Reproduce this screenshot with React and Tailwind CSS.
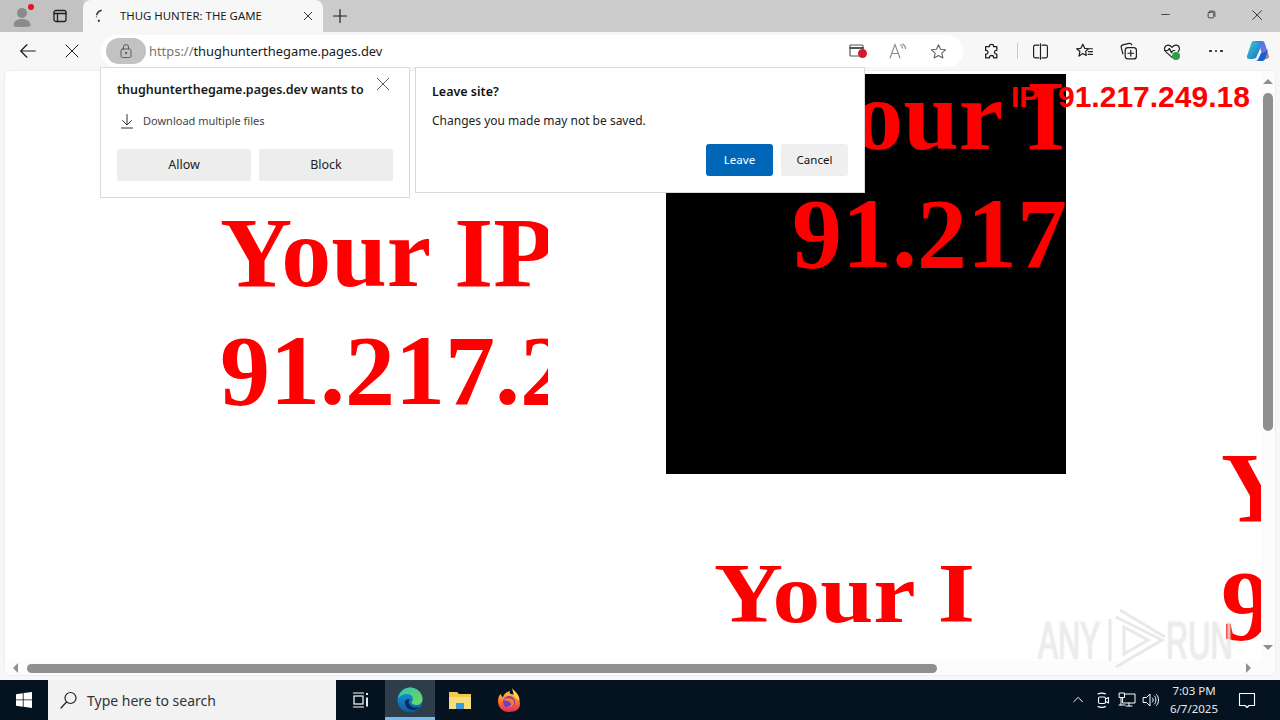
import React from "react";

const I = ({ s = 16, w, h, children, c = "#1f1f1f", sw = 1.2, vb = "0 0 16 16" }) => (
  <svg width={w || s} height={h || s} viewBox={vb} fill="none" stroke={c} strokeWidth={sw} strokeLinecap="round" strokeLinejoin="round">{children}</svg>
);

const Slot = ({ className = "w-[44px]", children }) => (
  <div className={"flex h-full shrink-0 items-center justify-center " + className}>{children}</div>
);

const star = "M8 1.6 9.9 5.9 14.6 6.4 11.1 9.5 12.1 14.1 8 11.7 3.9 14.1 4.9 9.5 1.4 6.4 6.1 5.9Z";

function Big({ className, lines }) {
  return (
    <div className={"absolute overflow-hidden whitespace-nowrap font-['Liberation_Serif',serif] text-[100px] leading-[118px] font-bold text-[#ff0000] " + className}>
      {lines.map((l) => <div key={l}>{l}</div>)}
    </div>
  );
}

function TitleBar() {
  return (
    <div className="flex h-8 shrink-0 items-end bg-[#cccccc]">
      <div className="flex h-full w-[83px] items-center bg-[#c2c2c2]">
        <div className="relative flex h-full w-[44px] items-center justify-center">
          <svg width="22" height="24" viewBox="0 0 22 24" fill="#8a8a8a">
            <circle cx="11" cy="9" r="5" />
            <path d="M2.5 22c0-5 3.5-7 8.5-7s8.5 2 8.5 7c-3 1.4-14 1.4-17 0Z" />
          </svg>
          <span className="absolute left-[28px] top-[4px] size-[6px] rounded-full bg-[#e81123]" />
        </div>
        <Slot className="w-[32px]">
          <I s={16} sw={1.3}>
            <rect x="2" y="2.5" width="12" height="11" rx="2" />
            <path d="M2 5.5h12M5.5 5.5v8" />
          </I>
        </Slot>
      </div>
      <div className="flex h-full w-[240px] items-center rounded-t-lg bg-[#f7f7f7]">
        <svg className="ml-[8px]" width="14" height="16" viewBox="0 0 14 16" fill="none" stroke="#444" strokeWidth="1.8" strokeLinecap="round">
          <path d="M10 2.500C8 3 6.500 4.500 5.800 6.500" />
          <path d="M5.500 8.800v.1" strokeWidth="1.500" stroke="#888" />
          <path d="M7.800 12.500v.6" stroke="#333" strokeWidth="2" />
        </svg>
        <span className="ml-[15px] w-[182px] font-['Noto_Sans',sans-serif] text-[11.4px] leading-none whitespace-nowrap text-[#1a1a1a]">THUG HUNTER: THE GAME</span>
        <I s={12} sw={1.2}><path d="M3 3l10 10M13 3 3 13" /></I>
      </div>
      <Slot className="w-[34px]">
        <I s={16} sw={1.2}><path d="M8 1.5v13M1.5 8h13" /></I>
      </Slot>
      <div className="flex-1" />
      <Slot className="w-[46px]"><I s={12} sw={1}><path d="M1 6h10" /></I></Slot>
      <Slot className="w-[46px]">
        <I s={12} sw={1}><rect x="1.5" y="3" width="7.5" height="7.5" rx="1.5" /><path d="M3.5 1.5h5a2 2 0 0 1 2 2v5" /></I>
      </Slot>
      <Slot className="w-[44px]"><I s={14} sw={1}><path d="M2 2l10 10M12 2 2 12" /></I></Slot>
    </div>
  );
}

function Toolbar() {
  return (
    <div className="flex h-[38px] shrink-0 items-center bg-[#f7f7f7]">
      <Slot className="ml-[6px] w-[44px]">
        <I s={18} sw={1.1}><path d="M1.5 8h13M7 2.5 1.5 8 7 13.5" /></I>
      </Slot>
      <Slot className="w-[44px]"><I s={16} sw={1}><path d="M2 2l12 12M14 2 2 14" /></I></Slot>
      <div className="ml-[7px] flex h-[32px] w-[862px] items-center rounded-full bg-white">
        <div className="ml-[5px] flex h-[26px] w-[40px] items-center justify-center rounded-full bg-[#c2c2c2]">
          <I s={16} c="#5f5f5f" sw={1}>
            <rect x="3" y="6" width="10" height="8.5" rx="1.5" />
            <path d="M5.5 6V4a2.5 2.5 0 0 1 5 0v2" />
            <circle cx="8" cy="10" r=".7" fill="#5f5f5f" />
          </I>
        </div>
        <span className="ml-[3px] pt-[2px] font-['Noto_Sans',sans-serif] text-[12.9px] whitespace-nowrap text-[#777777]">
          https://<span className="text-[#1a1a1a]">thughunterthegame.pages.dev</span>
        </span>
        <div className="flex-1" />
        <Slot className="w-[40px]">
          <div className="relative h-[16px] w-[18px]">
            <I s={16} c="#555" sw={1.2}>
              <rect x="1" y="2" width="13" height="11" rx="1" />
              <path d="M1 5h13" strokeWidth="2" />
            </I>
            <span className="absolute left-[9px] top-[6px] flex size-[9px] items-center justify-center rounded-full bg-[#d9172b]" />
          </div>
        </Slot>
        <Slot className="w-[40px]">
          <svg width="18" height="16" viewBox="0 0 18 16" fill="none" stroke="#8a8a8a" strokeWidth="1.1" strokeLinecap="round">
            <path d="M1 15 6 1.5 11 15M2.8 10.5h6.4" />
            <path d="M11.5 2c1.3.7 2 1.7 2 3M13.5 1c2 1 3 2.5 3 4.5" />
          </svg>
        </Slot>
        <Slot className="w-[40px]">
          <I s={17} c="#5f5f5f" sw={1}><path d={star} /></I>
        </Slot>
        <div className="w-[5px]" />
      </div>
      <Slot className="ml-[6px] w-[44px]">
        <I s={17} sw={1.2}>
          <path d="M6 3c0-2.3 4-2.3 4 0v.5h3V7h-.5c-2.3 0-2.3 3.5 0 3.5h.5v3.5H10v-.5c0-2.3-4-2.3-4 0v.5H2.5v-3.5H3c2.3 0 2.3-3.5 0-3.5h-.5V3.5H6Z" />
        </I>
      </Slot>
      <div className="ml-[4px] h-[16px] w-px bg-[#c8c8c8]" />
      <Slot className="w-[44px]">
        <I s={17} sw={1.1}>
          <path d="M6.5 2H3a1.5 1.5 0 0 0-1.5 1.5v9A1.5 1.5 0 0 0 3 14h3.5M9.5 2H13a1.5 1.5 0 0 1 1.5 1.5v9A1.5 1.5 0 0 1 13 14H9.5" />
          <path d="M8 .8v14.4" />
        </I>
      </Slot>
      <Slot className="w-[44px]">
        <I s={18} sw={1.1}><path d="M7 2 8.6 5.6 12 6 9.5 8.3 10 12 7 10.2 3.5 12.5 4.4 8.4 1.5 6l3.7-.4Z" /><path d="M12 8.5h3.5M11.7 11h3.8M12.5 6h3" /></I>
      </Slot>
      <Slot className="w-[44px]">
        <I s={18} sw={1.1}>
          <path d="M3.5 10.5 2 5a2 2 0 0 1 1.4-2.4L9 1.3a2 2 0 0 1 2.3 1.2" />
          <rect x="5.5" y="5" width="10" height="10" rx="2.5" />
          <path d="M10.5 7.5v5M8 10h5" />
        </I>
      </Slot>
      <Slot className="w-[44px]">
        <div className="relative h-[18px] w-[18px]">
          <I s={17} sw={1.1}>
            <path d="M8.5 14.5 2.5 9C.5 6.8 1.5 3 4.7 3 6.4 3 7.6 4 8.5 5 9.4 4 10.6 3 12.3 3c3.2 0 4 3.8 2 6" />
            <path d="M1.5 8h3l1.5-2 2 4 1.5-2h1.5" />
          </I>
          <span className="absolute left-[9px] top-[10px] size-[8px] rounded-full bg-[#2f9e44]" />
        </div>
      </Slot>
      <Slot className="w-[44px]">
        <div className="flex gap-[3px]">
          <span className="size-[2.5px] rounded-full bg-[#1f1f1f]" />
          <span className="size-[2.5px] rounded-full bg-[#1f1f1f]" />
          <span className="size-[2.5px] rounded-full bg-[#1f1f1f]" />
        </div>
      </Slot>
      <Slot className="w-[40px]">
        <svg width="24" height="24" viewBox="0 0 24 24">
          <defs>
            <linearGradient id="cpa" x1="0" y1="0" x2="1" y2="1"><stop offset="0" stopColor="#3fd0b8" /><stop offset="1" stopColor="#1670e0" /></linearGradient>
            <linearGradient id="cpb" x1="0" y1="0" x2="1" y2="1"><stop offset="0" stopColor="#1f86e8" /><stop offset=".7" stopColor="#7a6fe0" /><stop offset="1" stopColor="#e58a5a" /></linearGradient>
          </defs>
          <path d="M8 2h8c2 0 2.5 1 3 3l4 12c.6 2-1 3-2.500 3H17l-3-12C13.500 6 12.500 5 11 5H6.500C7 3 7 2 8 2Z" fill="url(#cpb)" />
          <path d="M8 2c-1.500 0-2.500 1-3 3L1 17c-.6 2 .5 3 2.500 3H7l3-1 4-9C15 5 12 2 8 2Z" fill="url(#cpa)" />
          <path d="M10 22h6c2 0 3-1 3.500-3L22 10c-2 3-5 4-7 4-1.500 3-3 8-5 8Z" fill="#1563cf" />
        </svg>
      </Slot>
    </div>
  );
}

function Page() {
  return (
    <div className="flex min-h-0 flex-1 bg-[#f7f7f7] pb-[4px] pl-[4px] pr-[4px]">
      <div className="relative flex-1 overflow-hidden rounded-t-[6px] rounded-b-[6px] border border-[#eeeeee] bg-white">
        {/* free canvas of the page: coordinates relative to (5,71) */}
        <Big className="left-[215px] top-[123px] h-[222px] w-[328px]" lines={["Your IP", "91.217.249.18"]} />
        <div className="absolute left-[661px] top-[3px] h-[400px] w-[400px] overflow-hidden bg-black">
          <Big className="left-[126px] top-[-17px] h-[417px] w-[274px]" lines={["Your IP", "91.217.249.18"]} />
        </div>
        <div className="absolute left-[709px] top-[474px] h-[100px] w-[260px] overflow-hidden">
          <div className="origin-top-left scale-x-[0.955] scale-y-[0.84] font-['Liberation_Serif',serif] text-[100px] leading-[118px] font-bold whitespace-nowrap text-[#ff0000]">Your IP</div>
        </div>
        <Big className="left-[1216px] top-[358px] h-[222px] w-[41px]" lines={["Your IP", "91.217.249.18"]} />
        <div className="absolute left-[1006px] top-[8px] font-['Liberation_Sans',sans-serif] text-[30px] leading-[36px] font-bold whitespace-nowrap text-[#ff0000]">
          <span className="inline-block w-[47px]">IP</span>91.217.249.18
        </div>

        {/* scrollbars */}
        <div className="absolute inset-y-0 right-0 w-[14px] bg-[#fcfcfc]">
          <span className="absolute left-[2px] top-[8px] h-0 w-0 border-x-[5px] border-b-[5px] border-x-transparent border-b-[#8f8f8f]" />
          <span className="absolute left-[2px] top-[22px] h-[338px] w-[10px] rounded-full bg-[#8f8f8f]" />
          <span className="absolute bottom-[25px] left-[2px] h-0 w-0 border-x-[5px] border-t-[5px] border-x-transparent border-t-[#8f8f8f]" />
        </div>
        <div className="absolute bottom-0 left-0 right-[14px] h-[14px] bg-[#fcfcfc]">
          <span className="absolute left-[8px] top-[2px] h-0 w-0 border-y-[5px] border-r-[5px] border-y-transparent border-r-[#8f8f8f]" />
          <span className="absolute left-[22px] top-[3px] h-[9px] w-[910px] rounded-full bg-[#8f8f8f]" />
          <span className="absolute left-[1241px] top-[2px] h-0 w-0 border-y-[5px] border-l-[5px] border-y-transparent border-l-[#8f8f8f]" />
        </div>

        {/* watermark */}
        <div className="absolute left-[1033px] top-[536px] flex h-[66px] items-center text-[#e8e8e8] opacity-80 [text-shadow:0_0_3px_#dddddd]">
          <span className="w-[70px] origin-left scale-x-[0.57] font-['Liberation_Sans',sans-serif] text-[53px] leading-none">ANY</span>
          <svg width="58" height="66" viewBox="0 0 58 66" fill="none" stroke="#e4e4e4" strokeWidth="3">
            <path d="M8 10 54 33 8 60" />
            <path d="M2 12v42M16 20l24 13-24 14Z" />
            <path d="M12 3 57 30" />
          </svg>
          <span className="w-[68px] origin-left scale-x-[0.58] font-['Liberation_Sans',sans-serif] text-[53px] leading-none">RUN</span>
        </div>
      </div>
    </div>
  );
}

function Permission() {
  return (
    <div className="absolute left-[100px] top-[67px] h-[131px] w-[310px] border border-[#dadada] bg-white font-['Noto_Sans',sans-serif]">
      <div className="flex items-start pl-[16px] pt-[13px]">
        <span className="text-[12.5px] leading-[18px] font-semibold whitespace-nowrap text-[#1a1a1a]">thughunterthegame.pages.dev wants to</span>
        <span className="ml-[12px] mt-[-4px]"><I s={14} sw={1} c="#444"><path d="M1.500 1.500l13 13M14.500 1.500l-13 13" /></I></span>
      </div>
      <div className="mt-[14px] flex items-center pl-[18px]">
        <I s={16} c="#333" sw={1}><path d="M8 1.500v10M3.500 7.500 8 12l4.500-4.500M2.500 15h11" /></I>
        <span className="ml-[8px] text-[11px] leading-[16px] text-[#444]">Download multiple files</span>
      </div>
      <div className="mt-[20px] flex gap-[8px] pl-[16px]">
        <button className="h-[32px] w-[134px] rounded-[2px] bg-[#ededed] text-[12.5px] text-[#222]">Allow</button>
        <button className="h-[32px] w-[134px] rounded-[2px] bg-[#ededed] text-[12.5px] text-[#222]">Block</button>
      </div>
    </div>
  );
}

function LeaveDialog() {
  return (
    <div className="absolute left-[415px] top-[67px] h-[126px] w-[450px] border border-[#dadada] bg-white font-['Noto_Sans',sans-serif]">
      <div className="pl-[16px] pt-[15px] text-[12.5px] leading-[18px] font-semibold text-[#111]">Leave site?</div>
      <div className="pl-[16px] pt-[11px] text-[12px] leading-[18px] text-[#222]">Changes you made may not be saved.</div>
      <div className="mt-[14px] flex justify-end gap-[8px] pr-[16px]">
        <button className="h-[32px] w-[67px] rounded-[3px] bg-[#0067b8] text-[11.500px] text-white">Leave</button>
        <button className="h-[32px] w-[67px] rounded-[3px] bg-[#efefef] text-[11.500px] text-[#111]">Cancel</button>
      </div>
    </div>
  );
}

function Taskbar() {
  return (
    <div className="flex h-10 shrink-0 items-stretch bg-[#04131f] text-white">
      <div className="flex w-[48px] items-center justify-center">
        <svg width="16" height="16" viewBox="0 0 16 16" fill="#ffffff"><path d="M0 2.200 6.800 1.200V7.500H0ZM7.600 1.100 16 0V7.500H7.600ZM0 8.300H6.800V14.700L0 13.700ZM7.600 8.300H16V16L7.600 14.800Z" /></svg>
      </div>
      <div className="flex w-[288px] items-center bg-[#f2f2f2] pl-[11px] font-['Noto_Sans',sans-serif]">
        <svg width="20" height="20" viewBox="0 0 20 20" fill="none" stroke="#222" strokeWidth="1.200" strokeLinecap="round"><circle cx="11.500" cy="8" r="5.500" /><path d="M7.500 12 2 18" /></svg>
        <span className="ml-[8px] text-[14px] text-[#333]">Type here to search</span>
      </div>
      <div className="flex w-[49px] items-center justify-center">
        <svg width="18" height="18" viewBox="0 0 18 18" fill="none" stroke="#fff" strokeWidth="1.200"><path d="M1 2h11M1 16h11" /><rect x="2" y="5" width="9" height="8" /><path d="M15 2v2M15 6.500v9" strokeWidth="1.800" /></svg>
      </div>
      <div className="flex w-[50px] items-center justify-center border-b-[3px] border-[#76b9ed] bg-[#2d3d49] pt-[3px]">
        <svg width="26" height="26" viewBox="0 0 26 26">
          <defs>
            <linearGradient id="eg" x1="0" y1="0" x2="1" y2="1"><stop offset="0" stopColor="#36c3a8" /><stop offset="1" stopColor="#6fdc5a" /></linearGradient>
            <linearGradient id="eb" x1="0" y1="0" x2="0" y2="1"><stop offset="0" stopColor="#1b9de2" /><stop offset="1" stopColor="#0c59a4" /></linearGradient>
          </defs>
          <circle cx="13" cy="13" r="12.500" fill="url(#eb)" />
          <path d="M1 11C3 4 8 .5 13 .5c7 0 12.500 5.500 12.500 11.500 0 4-3 6-6.500 6-2.500 0-4.500-1-4.500-2.500 0-1 1.500-1.500 1.500-3.500 0-3-3-5-6-5-4 0-7 2-8.500 4Z" fill="url(#eg)" />
          <path d="M8 15c0 5 4 8 8 8 3 0 5-1 6.500-3-4 1.500-9 .5-10.500-3-1-2 0-4 1-5-3 0-5 1-5 3Z" fill="#052c56" />
        </svg>
      </div>
      <div className="flex w-[50px] items-center justify-center">
        <svg width="24" height="20" viewBox="0 0 24 20">
          <path d="M1 2h8l2 2h12v15H1Z" fill="#f2c94c" />
          <path d="M1 7h22v12H1Z" fill="#f7dc7c" />
          <rect x="8" y="13" width="8" height="6" fill="#3b9ad9" />
        </svg>
      </div>
      <div className="ml-[-1px] flex w-[50px] items-center justify-center">
        <svg width="26" height="26" viewBox="0 0 26 26">
          <defs>
            <linearGradient id="ff" x1="0" y1="0" x2="0" y2="1"><stop offset="0" stopColor="#ffc83d" /><stop offset=".55" stopColor="#ff6b2c" /><stop offset="1" stopColor="#e8265a" /></linearGradient>
          </defs>
          <path d="M13 25C6 25 2 20 2 14c0-3 1-6 3-7 0 2 1 3 2 3 1-3 3-5 7-6-1 2 0 3 2 3 4 1 8 4 8 10 0 5-4 8-11 8Z" fill="url(#ff)" />
          <path d="M16 1c2 3 5 4 7 9 1 3 0 4 0 4l-5-5Z" fill="#ffd34e" />
          <circle cx="13" cy="15" r="6" fill="#6e3fc9" />
          <path d="M7 13c2-2 6-3 9-1 2 1 3 4 1 7-2 2-5 2-7 1 3 0 5-1 5-3s-3-3-8-4Z" fill="#ff7b2c" />
        </svg>
      </div>
      <div className="flex-1" />
      <div className="flex items-center pr-[11px]">
        <Slot className="w-[24px]">
          <I s={14} c="#fff" sw={1.100}><path d="M2 10l5-5 5 5" /></I>
        </Slot>
        <Slot className="w-[24px]">
          <I s={18} c="#fff" sw={1.100} vb="0 0 18 18">
            <rect x="4.500" y="6" width="7" height="6.500" rx="1.500" />
            <path d="M11.500 8 14.500 6.500v5.500l-3-1.500M4 3c1.500-1.200 6-1.200 7.500 0M4 15.500c1.500 1.200 6 1.200 7.500 0" />
          </I>
        </Slot>
        <Slot className="w-[24px]">
          <I s={18} c="#fff" sw={1} vb="0 0 18 18">
            <rect x="5" y="3" width="12" height="9" />
            <rect x="1.500" y="2" width="5" height="4.500" fill="#04131f" />
            <path d="M3 6.500V14M1 14h6M11 12v3M8 15h6" />
          </I>
        </Slot>
        <Slot className="w-[24px]">
          <I s={18} c="#fff" sw={1} vb="0 0 18 18">
            <path d="M1.500 6.500h3L8 3v12l-3.500-3.500h-3Z" />
            <path d="M10.500 7c1 1.200 1 2.800 0 4M12.500 5c2 2.200 2 5.800 0 8M14.500 3.500c2.800 3 2.800 8 0 11" />
          </I>
        </Slot>
        <div className="flex w-[62px] flex-col items-center font-['Noto_Sans',sans-serif] text-[11.500px] leading-[18px] text-[#e8e8e8]">
          <span>7:03 PM</span>
          <span>6/7/2025</span>
        </div>
        <Slot className="w-[44px]">
          <I s={18} c="#fff" sw={1.100} vb="0 0 18 18"><path d="M1.500 2.500h15v12h-5.500L9 16.500l-2-2H1.500Z" /></I>
        </Slot>
      </div>
    </div>
  );
}

export default function App() {
  return (
    <div className="relative flex h-[720px] w-[1280px] flex-col overflow-hidden bg-white">
      <TitleBar />
      <Toolbar />
      <Page />
      <Taskbar />
      <Permission />
      <LeaveDialog />
    </div>
  );
}
